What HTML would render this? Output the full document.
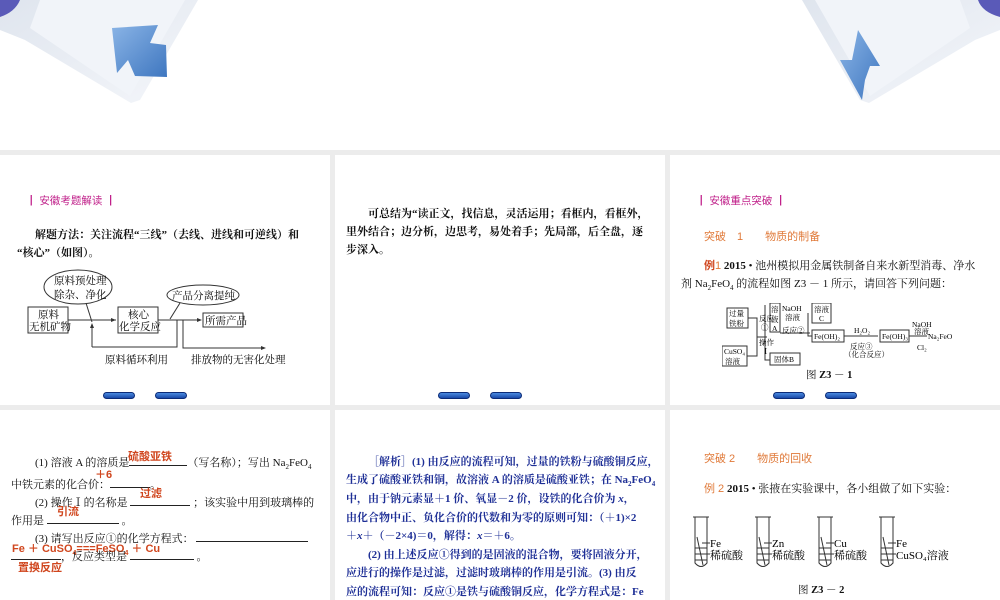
<!DOCTYPE html>
<html><head><meta charset="utf-8"><style>
*{margin:0;padding:0;box-sizing:border-box}
body{width:1000px;height:600px;overflow:hidden;background:#fff;position:relative;font-family:"Liberation Serif","Noto Serif CJK SC","Noto Sans CJK SC",serif;color:#111}
.band{position:absolute;left:0;top:150px;width:1000px;height:450px;background:#ececec}
.s{position:absolute;background:#fff;overflow:hidden}
.t{position:absolute;font-size:11.3px;white-space:nowrap;line-height:18px}
.h{color:#c0208a;font-family:"Liberation Sans","Noto Sans CJK SC",sans-serif;font-size:10.5px}
.o{color:#e07a3a;font-family:"Liberation Sans","Noto Sans CJK SC",sans-serif}
.r{color:#d0461e;font-weight:bold;font-family:"Liberation Sans","Noto Sans CJK SC",sans-serif}
.b{color:#1e2f96}
.btn{position:absolute;width:32px;height:7px;border-radius:4px;background:linear-gradient(#4a8ae0,#1a4aa8);border:1px solid #0c2c78}
.u{display:inline-block;border-bottom:1px solid #222}
</style></head><body>
<svg style="position:absolute;left:0;top:0" width="200" height="110">
<defs><linearGradient id="g1" x1="0" y1="0" x2="1" y2="1"><stop offset="0" stop-color="#dfe5ee"/><stop offset="1" stop-color="#f4f6fa"/></linearGradient>
<linearGradient id="ga" x1="0" y1="0" x2="1" y2="1"><stop offset="0" stop-color="#8ab4e6"/><stop offset="1" stop-color="#3f77c0"/></linearGradient></defs>
<path d="M0 0 L198 0 L140 100 L131 103 L25 40 L0 30Z" fill="url(#g1)"/>
<path d="M30 28 L130 96 L185 0 L40 0Z" fill="#f1f4f9"/>
<path d="M0 0 L20 0 Q15 12 0 17Z" fill="#5a5ab8"/>
<path d="M112 28 L158 25 L150 43 L166 45 L167 77 L135 76 L128 60 L117 73Z" fill="url(#ga)"/>
</svg>
<svg style="position:absolute;right:0;top:0" width="200" height="110">
<path d="M200 0 L2 0 L60 100 L69 103 L175 40 L200 30Z" fill="url(#g1)"/>
<path d="M170 28 L70 96 L15 0 L160 0Z" fill="#f1f4f9"/>
<path d="M200 0 L178 0 Q182 12 200 17Z" fill="#5a5ab8"/>
<path d="M62 100 L40 60 L52 60 L58 30 L80 66 L70 66 L65 80Z" fill="url(#ga)"/>
</svg>
<div class="band"></div>

<!-- slide 1 -->
<div class="s" style="left:0;top:155px;width:330px;height:250px">
<div class="t h" style="left:26px;top:37px">┃ 安徽考题解读 ┃</div>
<div class="t" style="left:35px;top:71px;font-weight:bold;font-size:11px">解题方法：关注流程“三线”（去线、进线和可逆线）和</div>
<div class="t" style="left:17px;top:89px;font-weight:bold;font-size:11px">“核心”（如图）。</div>
<svg style="position:absolute;left:0;top:110px" width="330" height="100" font-size="10.5" font-family="Liberation Serif,Noto Serif CJK SC,serif">
<g fill="none" stroke="#333">
<ellipse cx="78" cy="22" rx="34" ry="17" fill="#fff"/>
<path d="M86 38 L92 57"/>
<rect x="28" y="42" width="40" height="26" fill="#fff"/>
<path d="M68 55 H116"/>
<path d="M92 82 V60"/>
<rect x="118" y="42" width="40" height="26" fill="#fff"/>
<ellipse cx="203" cy="30" rx="36" ry="10" fill="#fff"/>
<path d="M180 38 L170 54"/>
<path d="M158 55 H200"/>
<rect x="203" y="48" width="40" height="14" fill="#fff"/>
<path d="M177 55 V82 H92"/>
<path d="M183 55 V83 H264"/>
</g>
<g fill="#333"><path d="M116 55 l-5 -2 v4z"/><path d="M92 58 l-2 5 h4z"/><path d="M202 55 l-5 -2 v4z"/><path d="M266 83 l-5 -2 v4z"/></g>
<text x="54" y="19">原料预处理</text><text x="54" y="33">除杂、净化</text>
<text x="38" y="53">原料</text><text x="29" y="65">无机矿物</text>
<text x="128" y="53">核心</text><text x="119" y="65">化学反应</text>
<text x="172" y="34">产品分离提纯</text>
<text x="205" y="59">所需产品</text>
<text x="105" y="98">原料循环利用</text>
<text x="191" y="98">排放物的无害化处理</text>
</svg>
<div class="btn" style="left:103px;top:237px"></div><div class="btn" style="left:155px;top:237px"></div>
</div>

<!-- slide 2 -->
<div class="s" style="left:335px;top:155px;width:330px;height:250px">
<div class="t" style="left:33px;top:50px;font-weight:bold;font-size:11px">可总结为“读正文，找信息，灵活运用；看框内，看框外，</div>
<div class="t" style="left:11px;top:68px;font-weight:bold;font-size:11px">里外结合；边分析，边思考，易处着手；先局部，后全盘，逐</div>
<div class="t" style="left:11px;top:86px;font-weight:bold;font-size:11px">步深入。</div>
<div class="btn" style="left:103px;top:237px"></div><div class="btn" style="left:155px;top:237px"></div>
</div>

<!-- slide 3 -->
<div class="s" style="left:670px;top:155px;width:330px;height:250px">
<div class="t h" style="left:26px;top:37px">┃ 安徽重点突破 ┃</div>
<div class="t o" style="left:34px;top:73px;font-size:11px">突破　1　　物质的制备</div>
<div class="t" style="left:34px;top:102px;font-size:11px"><span class="r" style="font-size:11px">例</span><span class="o">1</span> <b>2015</b> • 池州模拟用金属铁制备自来水新型消毒、净水</div>
<div class="t" style="left:11px;top:120px;font-size:11px">剂 Na<sub style="font-size:7px">2</sub>FeO<sub style="font-size:7px">4</sub> 的流程如图 Z3 － 1 所示，请回答下列问题：</div>
<svg style="position:absolute;left:52px;top:148px" width="230" height="66" font-size="7.5" font-family="Liberation Serif,Noto Serif CJK SC,serif">
<g fill="none" stroke="#333"><rect x="5" y="5" width="21" height="20"/><rect x="0" y="43" width="25" height="20"/><rect x="48" y="0" width="10" height="29"/><rect x="90" y="0" width="19" height="20"/><rect x="90" y="27" width="32" height="12"/><rect x="158" y="27" width="29" height="12"/><rect x="48" y="50" width="30" height="12"/>
<path d="M26 15 H35 V53 H25 M35 34 H45 M43 2 V57 H48 M58 30 H88 M86 10 V33 H90 M122 33 H156 M187 33 H205"/></g>
<text x="7" y="13">过量</text><text x="7" y="23">铁粉</text><text x="2" y="51">CuSO₄</text><text x="3" y="61">溶液</text>
<text x="37" y="18">反应</text><text x="39" y="27">①</text><text x="37" y="42">操作</text><text x="40" y="51">Ⅰ</text>
<text x="49" y="9">溶</text><text x="49" y="19">液</text><text x="50" y="28">A</text>
<text x="60" y="8">NaOH</text><text x="63" y="17">溶液</text><text x="60" y="30">反应②</text>
<text x="92" y="9">溶液</text><text x="97" y="18">C</text>
<text x="92" y="36">Fe(OH)₂</text><text x="132" y="30">H₂O₂</text><text x="128" y="46">反应③</text><text x="122" y="54">（化合反应）</text>
<text x="160" y="36">Fe(OH)₃</text><text x="190" y="24">NaOH</text><text x="192" y="31">溶液</text><text x="206" y="36">Na₂FeO₄</text><text x="195" y="47">Cl₂</text>
<text x="52" y="59">固体B</text>
</svg>
<div class="t" style="left:136px;top:212px;font-size:10.5px">图 <b>Z3 － 1</b></div>
<div class="btn" style="left:103px;top:237px"></div><div class="btn" style="left:155px;top:237px"></div>
</div>

<!-- slide 4 -->
<div class="s" style="left:0;top:410px;width:330px;height:190px">
<div class="t" style="left:35px;top:44px;font-size:11px">(1) 溶液 A 的溶质是<span class="u" style="width:58px"></span>（写名称）；写出 Na<sub style="font-size:7px">2</sub>FeO<sub style="font-size:7px">4</sub></div>
<div class="t r" style="left:128px;top:38px;font-size:11px">硫酸亚铁</div>
<div class="t" style="left:11px;top:66px;font-size:11px">中铁元素的化合价：<span class="u" style="width:40px"></span>。</div>
<div class="t r" style="left:95px;top:56px;font-size:11px">＋6</div>
<div class="t" style="left:35px;top:84px;font-size:11px">(2) 操作Ⅰ的名称是 <span class="u" style="width:60px"></span> ；该实验中用到玻璃棒的</div>
<div class="t r" style="left:140px;top:75px;font-size:11px">过滤</div>
<div class="t" style="left:11px;top:102px;font-size:11px">作用是 <span class="u" style="width:72px"></span> 。</div>
<div class="t r" style="left:57px;top:93px;font-size:11px">引流</div>
<div class="t" style="left:35px;top:120px;font-size:11px">(3) 请写出反应①的化学方程式： <span class="u" style="width:112px"></span></div>
<div class="t r" style="left:12px;top:130px;font-size:11px">Fe ＋ CuSO<sub style="font-size:7px">4</sub>===FeSO<sub style="font-size:7px">4</sub> ＋ Cu</div>
<div class="t" style="left:11px;top:138px;font-size:11px"><span class="u" style="width:50px"></span>，反应类型是 <span class="u" style="width:64px"></span> 。</div>
<div class="t r" style="left:18px;top:149px;font-size:11px">置换反应</div>
</div>

<!-- slide 5 -->
<div class="s b" style="left:335px;top:410px;width:330px;height:190px">
<div class="t" style="left:33px;top:43px;font-weight:bold;font-size:11px">［解析］(1) 由反应的流程可知，过量的铁粉与硫酸铜反应，</div>
<div class="t" style="left:11px;top:61px;font-weight:bold;font-size:11px">生成了硫酸亚铁和铜，故溶液 A 的溶质是硫酸亚铁；在 Na<sub style="font-size:7px">2</sub>FeO<sub style="font-size:7px">4</sub></div>
<div class="t" style="left:11px;top:80px;font-weight:bold;font-size:11px">中，由于钠元素显＋1 价、氧显－2 价，设铁的化合价为 <i>x</i>，</div>
<div class="t" style="left:11px;top:99px;font-weight:bold;font-size:11px">由化合物中正、负化合价的代数和为零的原则可知：（＋1)×2</div>
<div class="t" style="left:11px;top:117px;font-weight:bold;font-size:11px">＋<i>x</i>＋（－2×4)＝0，解得：<i>x</i>＝＋6。</div>
<div class="t" style="left:33px;top:136px;font-weight:bold;font-size:11px">(2) 由上述反应①得到的是固液的混合物，要将固液分开，</div>
<div class="t" style="left:11px;top:154px;font-weight:bold;font-size:11px">应进行的操作是过滤，过滤时玻璃棒的作用是引流。(3) 由反</div>
<div class="t" style="left:11px;top:173px;font-weight:bold;font-size:11px">应的流程可知：反应①是铁与硫酸铜反应，化学方程式是：Fe</div>
</div>

<!-- slide 6 -->
<div class="s" style="left:670px;top:410px;width:330px;height:190px">
<div class="t o" style="left:34px;top:40px;font-size:11px">突破 2　　物质的回收</div>
<div class="t" style="left:34px;top:70px;font-size:11px"><span class="o">例 2</span> <b>2015</b> • 张掖在实验课中，各小组做了如下实验：</div>
<svg style="position:absolute;left:20px;top:100px" width="280" height="60" font-size="11" font-family="Liberation Serif,Noto Serif CJK SC,serif">
<g fill="none" stroke="#333">
<g id="tb"><path d="M3 7 H19 M5 7 V53 Q11 60 17 53 V7 M5 38 H17 M5 44 H17 M5 50 H17 M7 27 L13 55 M12 33 H20 M12 44 H20"/></g>
<use href="#tb" x="62"/><use href="#tb" x="124"/><use href="#tb" x="186"/>
</g>
<text x="20" y="37">Fe</text><text x="20" y="49">稀硫酸</text>
<text x="82" y="37">Zn</text><text x="82" y="49">稀硫酸</text>
<text x="144" y="37">Cu</text><text x="144" y="49">稀硫酸</text>
<text x="206" y="37">Fe</text><text x="206" y="49">CuSO₄溶液</text>
</svg>
<div class="t" style="left:128px;top:172px;font-size:10.5px">图 <b>Z3 － 2</b></div>
</div>
</body></html>
